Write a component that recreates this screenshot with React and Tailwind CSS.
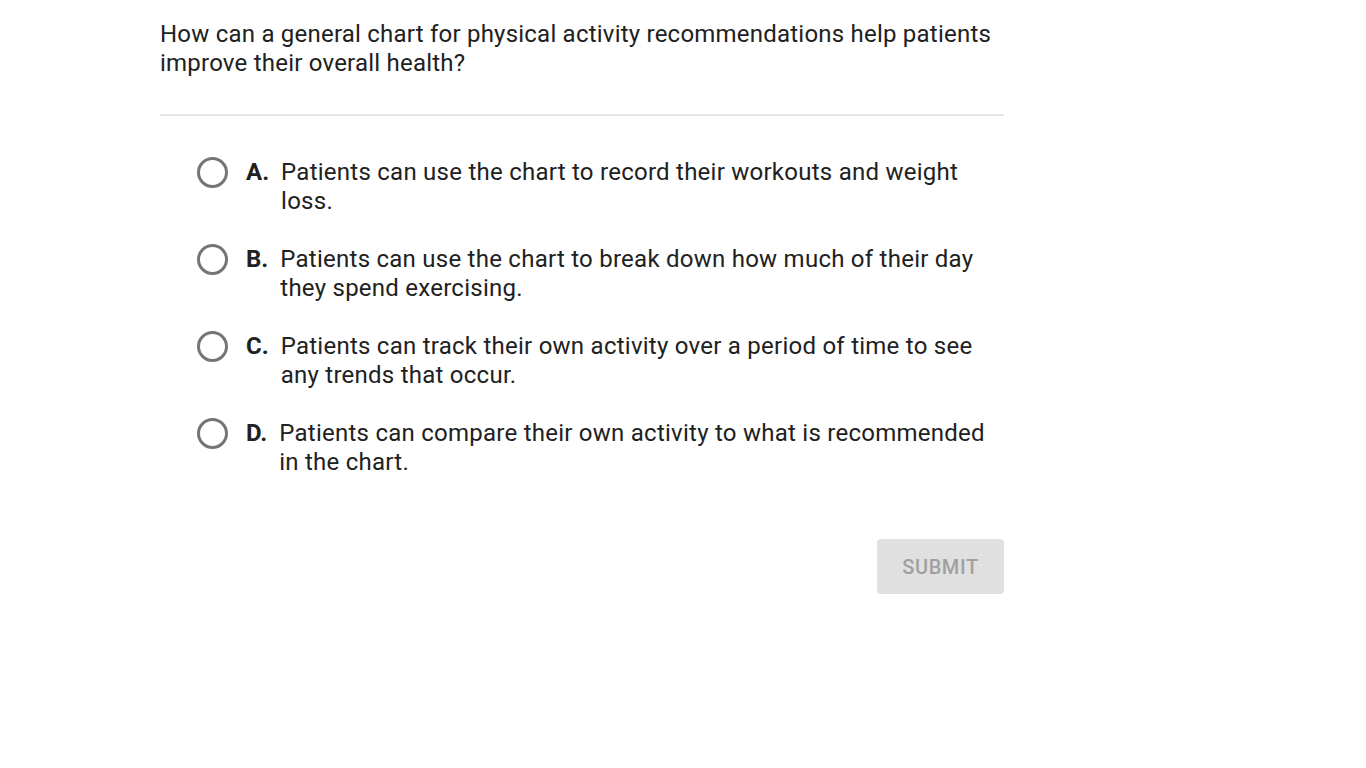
import React, { useState } from 'react';

const options = [
  { key: 'A', text: 'Patients can use the chart to record their workouts and weight loss.' },
  { key: 'B', text: 'Patients can use the chart to break down how much of their day they spend exercising.' },
  { key: 'C', text: 'Patients can track their own activity over a period of time to see any trends that occur.' },
  { key: 'D', text: 'Patients can compare their own activity to what is recommended in the chart.' },
];

export default function App() {
  const [picked, setPicked] = useState(null);

  return (
    <div className="min-h-[768px] bg-white font-['Roboto',sans-serif] text-[#212121]">
      <div className="w-[844px] ml-[160px] pt-[20px]">
        <p className="text-[24px] leading-[29px] tracking-[0.22px] pr-[6px]">
          How can a general chart for physical activity recommendations help patients improve their overall health?
        </p>

        <div className="mt-[36px] border-t-2 border-[#e6e6e6]" />

        <div className="mt-[42px] pl-[37px] flex flex-col gap-[29px]">
          {options.map(({ key, text }) => (
            <button
              key={key}
              onClick={() => setPicked(key)}
              className="flex items-start text-left"
            >
              <span className="-mt-[1px] w-[31px] h-[31px] shrink-0 rounded-full border-[3px] border-[#757575] flex items-center justify-center">
                {picked === key && <span className="w-[15px] h-[15px] rounded-full bg-[#757575]" />}
              </span>
              <span className="ml-[18px] text-[24px] leading-[29px] font-bold shrink-0">{key}.</span>
              <span className="ml-[12px] text-[24px] leading-[29px] tracking-[0.25px] pr-[10px]">{text}</span>
            </button>
          ))}
        </div>

        <div className="mt-[62px] flex justify-end">
          <button className="w-[127px] h-[55px] rounded-[4px] bg-[#e0e0e0] text-[#a0a0a0] text-[20px] font-medium tracking-[0.6px]">
            SUBMIT
          </button>
        </div>
      </div>
    </div>
  );
}
